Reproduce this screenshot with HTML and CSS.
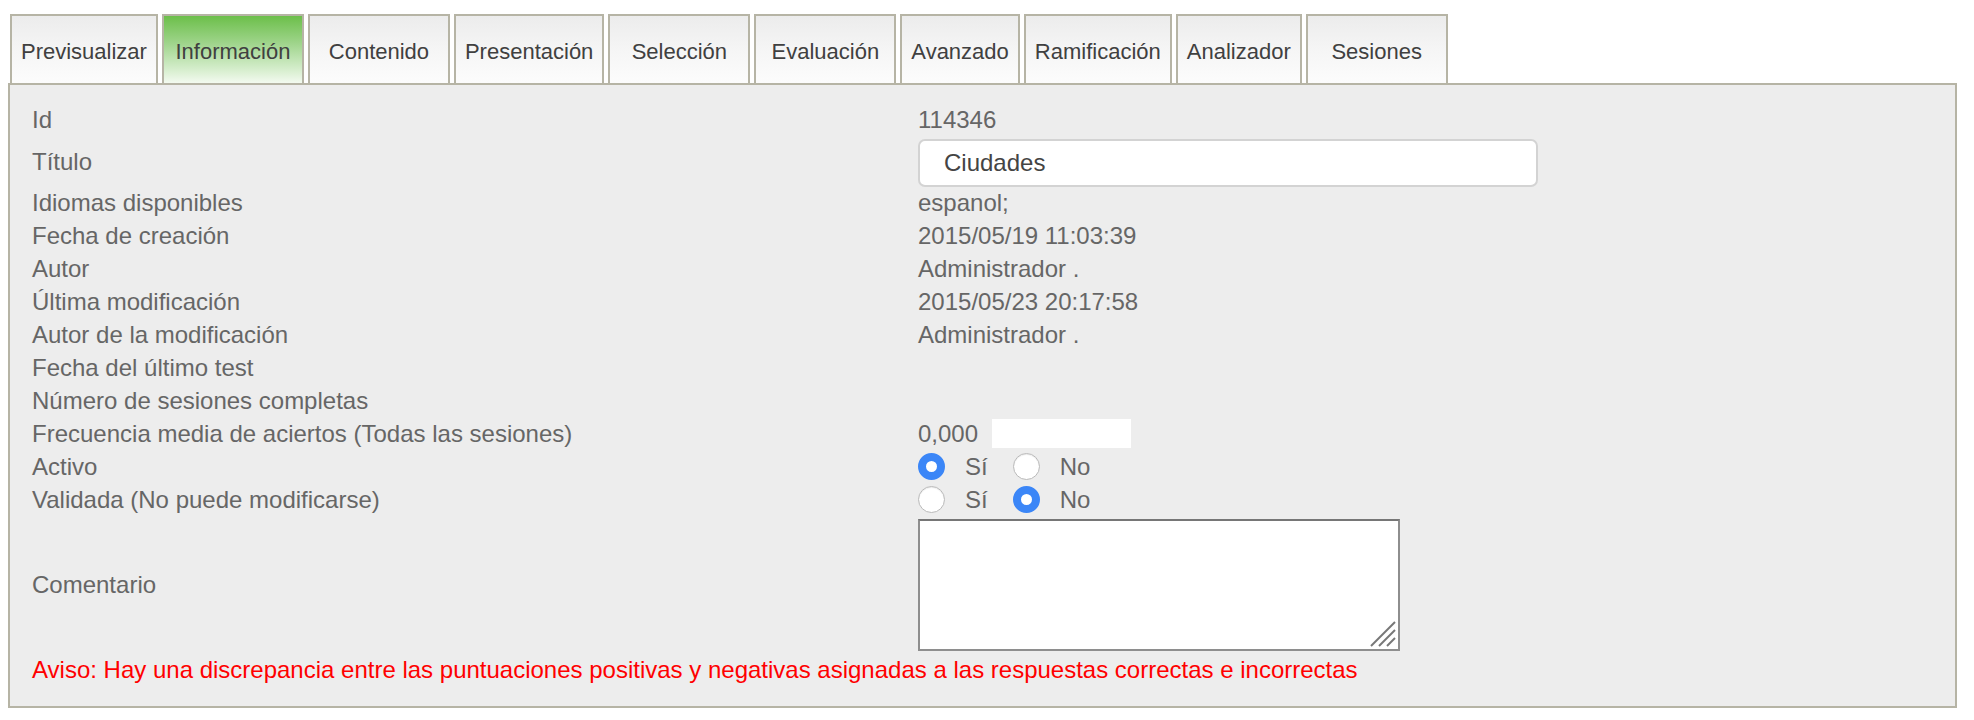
FILE: index.html
```html
<!DOCTYPE html>
<html lang="es">
<head>
<meta charset="utf-8">
<title>Información</title>
<link rel="stylesheet" href="styles.css">
</head>
<body>
<div class="page">
  <nav class="tabs">
    <div class="tab">Previsualizar</div>
    <div class="tab tab-fixed tab-active">Información</div>
    <div class="tab tab-fixed">Contenido</div>
    <div class="tab">Presentación</div>
    <div class="tab tab-fixed">Selección</div>
    <div class="tab tab-fixed">Evaluación</div>
    <div class="tab">Avanzado</div>
    <div class="tab">Ramificación</div>
    <div class="tab">Analizador</div>
    <div class="tab tab-fixed">Sesiones</div>
  </nav>
  <section class="panel">
    <div class="info-grid">
      <div class="lbl row">Id</div>
      <div class="val row">114346</div>

      <div class="lbl row-title">Título</div>
      <div class="val row-title"><input class="title-input" type="text" value="Ciudades"></div>

      <div class="lbl row">Idiomas disponibles</div>
      <div class="val row">espanol;</div>

      <div class="lbl row">Fecha de creación</div>
      <div class="val row">2015/05/19 11:03:39</div>

      <div class="lbl row">Autor</div>
      <div class="val row">Administrador .</div>

      <div class="lbl row">Última modificación</div>
      <div class="val row">2015/05/23 20:17:58</div>

      <div class="lbl row">Autor de la modificación</div>
      <div class="val row">Administrador .</div>

      <div class="lbl row">Fecha del último test</div>
      <div class="val row"></div>

      <div class="lbl row">Número de sesiones completas</div>
      <div class="val row"></div>

      <div class="lbl row">Frecuencia media de aciertos (Todas las sesiones)</div>
      <div class="val row"><span>0,000</span><span class="freq-bar"></span></div>

      <div class="lbl row">Activo</div>
      <div class="val row">
        <label class="opt"><input class="radio" type="radio" name="activo" checked><span>Sí</span></label>
        <label class="opt"><input class="radio" type="radio" name="activo"><span>No</span></label>
      </div>

      <div class="lbl row">Validada (No puede modificarse)</div>
      <div class="val row">
        <label class="opt"><input class="radio" type="radio" name="validada"><span>Sí</span></label>
        <label class="opt"><input class="radio" type="radio" name="validada" checked><span>No</span></label>
      </div>

      <div class="lbl row-comment">Comentario</div>
      <div class="val row-comment">
        <div class="ta-wrap">
          <textarea class="comment"></textarea>
          <svg class="grip" width="28" height="28" viewBox="0 0 28 28" aria-hidden="true">
            <line x1="2" y1="26" x2="26" y2="2" />
            <line x1="10" y1="26" x2="26" y2="10" />
            <line x1="18" y1="26" x2="26" y2="18" />
          </svg>
        </div>
      </div>
    </div>
    <p class="aviso">Aviso: Hay una discrepancia entre las puntuaciones positivas y negativas asignadas a las respuestas correctas e incorrectas</p>
  </section>
</div>
</body>
</html>
```

FILE: styles.css
```css
* {
  box-sizing: border-box;
}

html, body {
  margin: 0;
  padding: 0;
  background: #ffffff;
}

body {
  font-family: "Liberation Sans", Arial, Helvetica, sans-serif;
  color: #666666;
}

.page {
  padding: 14px 0 0 8px;
}

/* ---------- tabs ---------- */
.tabs {
  display: flex;
  gap: 4px;
  margin-left: 2px;
}

.tab {
  height: 69px;
  padding: 5px 9px 0;
  border: 2px solid #b6b4a5;
  border-bottom: none;
  background: linear-gradient(to bottom, #ececec 0%, #f6f6f6 55%, #fcfcfc 100%);
  color: #404040;
  font-size: 22px;
  display: flex;
  align-items: center;
  justify-content: center;
  white-space: nowrap;
}

.tab-fixed {
  width: 142px;
}

.tab-active {
  background: linear-gradient(to bottom, #6cbf4a 0%, #9ed48a 40%, #d6eecd 80%, #f3faf0 100%);
}

/* ---------- panel ---------- */
.panel {
  width: 1949px;
  height: 625px;
  border: 2px solid #b6b4a5;
  background: #ededed;
  padding: 18px 22px 0 22px;
}

.info-grid {
  display: grid;
  grid-template-columns: 886px 1fr;
  font-size: 24px;
  line-height: 33px;
}

.lbl,
.val {
  display: flex;
  align-items: center;
  white-space: nowrap;
}

.row {
  height: 33px;
}

.row-title {
  height: 50px;
}

.row-comment {
  height: 136px;
}

.title-input {
  width: 620px;
  height: 48px;
  margin-top: 3px;
  border: 2px solid #d3d3d3;
  border-radius: 7px;
  background: #ffffff;
  padding: 0 0 0 24px;
  font-family: inherit;
  font-size: 24px;
  color: #444444;
  outline: none;
}

.freq-bar {
  display: inline-block;
  width: 139px;
  height: 29px;
  margin-left: 14px;
  background: #ffffff;
}

.opt {
  display: inline-flex;
  align-items: center;
  margin-right: 25px;
}

.opt span {
  margin-left: 20px;
}

.radio {
  -webkit-appearance: none;
  appearance: none;
  width: 27px;
  height: 27px;
  margin: 0;
  border-radius: 50%;
  border: 1px solid #b9b9b9;
  background: #ffffff;
  box-shadow: inset 0 1px 1px rgba(0, 0, 0, 0.08);
}

.radio:checked {
  border: 8.5px solid #3b86f7;
  background: #ffffff;
  box-shadow: none;
}

.ta-wrap {
  position: relative;
  width: 482px;
  height: 132px;
  margin-top: 2px;
}

.comment {
  display: block;
  width: 482px;
  height: 132px;
  margin: 0;
  border: 2px solid #8e8e8e;
  border-top-color: #767676;
  background: #ffffff;
  resize: none;
  outline: none;
}

.grip {
  position: absolute;
  right: 3px;
  bottom: 3px;
}

.grip line {
  stroke: #777777;
  stroke-width: 2;
}

.aviso {
  margin: 1px 0 0;
  height: 33px;
  line-height: 33px;
  font-size: 24px;
  color: #ff0000;
  white-space: nowrap;
}
```
